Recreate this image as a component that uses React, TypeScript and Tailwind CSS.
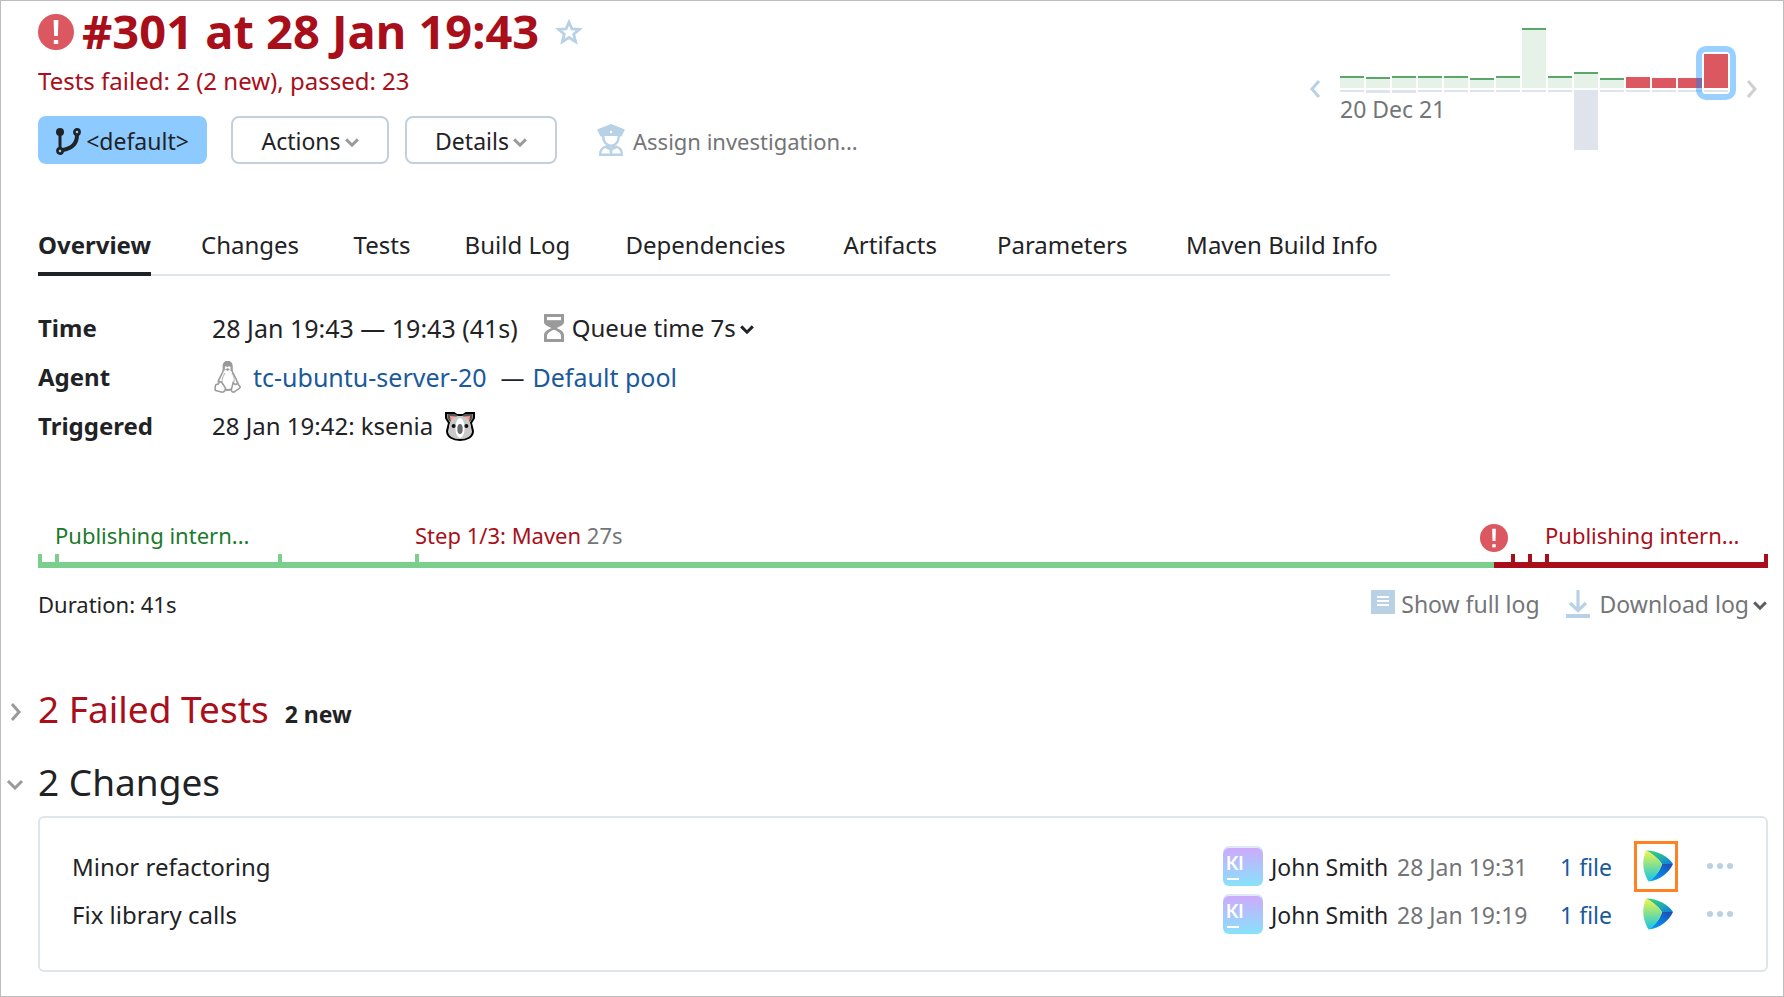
import React from 'react';

type Bar = { top: number; bottom: number; failed?: boolean; selected?: boolean };

const history: Bar[] = [
  { top: 12, bottom: 2 },
  { top: 11, bottom: 3 },
  { top: 12, bottom: 3 },
  { top: 12, bottom: 2 },
  { top: 12, bottom: 2 },
  { top: 10, bottom: 2 },
  { top: 12, bottom: 2 },
  { top: 60, bottom: 2 },
  { top: 12, bottom: 2 },
  { top: 16, bottom: 60 },
  { top: 10, bottom: 2 },
  { top: 11, bottom: 2, failed: true },
  { top: 10, bottom: 2, failed: true },
  { top: 10, bottom: 2, failed: true },
  { top: 34, bottom: 2, failed: true, selected: true },
];

const tabs = ['Overview', 'Changes', 'Tests', 'Build Log', 'Dependencies', 'Artifacts', 'Parameters', 'Maven Build Info'];

type Segment = { size: number; failed?: boolean; tick?: boolean; label?: React.ReactNode; alert?: boolean; last?: boolean };

const segments: Segment[] = [
  { size: 17, tick: true },
  { size: 223, tick: true, label: <span className="text-[#1b7a2b]">Publishing intern...</span> },
  { size: 137, tick: true },
  {
    size: 1079,
    tick: true,
    label: (
      <span className="text-[#a90f1a]">
        Step 1/3: Maven <span className="text-[#737577]">27s</span>
      </span>
    ),
  },
  { size: 17, failed: true, alert: true },
  { size: 17, failed: true, tick: true },
  { size: 17, failed: true, tick: true },
  { size: 223, failed: true, tick: true, last: true, label: <span className="text-[#a90f1a]">Publishing intern...</span> },
];

const changes = [
  { message: 'Minor refactoring', author: 'John Smith', date: '28 Jan 19:31', marked: true },
  { message: 'Fix library calls', author: 'John Smith', date: '28 Jan 19:19', marked: false },
];

function Chevron({ dir, className }: { dir: 'down' | 'left' | 'right'; className: string }) {
  const points = { down: '2,2 9,9 16,2', left: '9,1 2,9 9,17', right: '2,1 9,9 2,17' }[dir];
  return (
    <svg
      className={className}
      viewBox={dir === 'down' ? '0 0 18 11' : '0 0 11 18'}
      fill="none"
      stroke="currentColor"
      strokeWidth="3"
      aria-hidden="true"
    >
      <polyline points={points} />
    </svg>
  );
}

function SmallChevron({ className }: { className: string }) {
  return (
    <svg className={className} width="14" height="14" viewBox="0 0 14 14" fill="none" stroke="currentColor" strokeWidth="3" aria-hidden="true">
      <path d="M1.2 5.4 L7 11.2 L12.8 5.4" />
    </svg>
  );
}

function ErrorIcon({ size }: { size: number }) {
  return (
    <svg className="shrink-0" width={size} height={size} viewBox="0 0 36 36" aria-hidden="true">
      <circle cx="18" cy="18" r="18" fill="#db5860" />
      <path d="M15.6 6h4.8l-.5 16h-3.8z" fill="#fff" />
      <rect x="15.8" y="26" width="4.4" height="4" fill="#fff" />
    </svg>
  );
}

function StarIcon() {
  return (
    <svg width="28" height="26" viewBox="0 0 28 26" fill="none" stroke="#b8d1e5" strokeWidth="2.8" aria-hidden="true">
      <path d="M14 3.2 L16.9 9.8 L24.4 10.4 L18.7 15.200 L20.600 22.600 L14 18.500 L7.400 22.600 L9.300 15.200 L3.600 10.400 L11.100 9.800 Z" />
    </svg>
  );
}

function BranchIcon() {
  return (
    <svg width="26" height="28" viewBox="0 0 26 28" fill="none" stroke="#1f2326" aria-hidden="true">
      <circle cx="4" cy="5" r="4" fill="#1f2326" stroke="none" />
      <path d="M4 5v17" strokeWidth="3" />
      <circle cx="4" cy="24" r="2.6" strokeWidth="2.6" />
      <circle cx="21" cy="5" r="2.6" strokeWidth="2.6" />
      <path d="M21 8c0 7-3 13-14 15" strokeWidth="4" />
    </svg>
  );
}

function OfficerIcon() {
  return (
    <svg width="28" height="32" viewBox="0 0 28 32" aria-hidden="true">
      <path d="M14 0 L28 5.5 L24.5 12.5 H3.5 L0 5.5 Z" fill="#b8d1e5" />
      <circle cx="14" cy="8" r="1.2" fill="#fff" />
      <path d="M6.2 12 C6.2 25 21.8 25 21.8 12" fill="#fff" stroke="#b8d1e5" strokeWidth="2.4" />
      <path d="M3.2 30.8 C3 25.5 6 22.6 10 22.6 H18 C22 22.6 25 25.5 24.8 30.8 Z" fill="#fff" stroke="#b8d1e5" strokeWidth="2.4" />
      <path d="M8 22.5 L14 25.5 L20 22.5 M14 24v7" fill="none" stroke="#b8d1e5" strokeWidth="2.6" />
    </svg>
  );
}

function HourglassIcon() {
  return (
    <svg width="20" height="28" viewBox="0 0 20 28" aria-hidden="true">
      <path d="M0 0H20V8C20 10.500 17 12 12.500 14C17 16 20 18 20 21V28H0V21C0 18 3 16 7.500 14C3 12 0 10.500 0 8Z" fill="#9a9a9a" />
      <path d="M3 3h14v3.200H3z" fill="#fff" />
      <path d="M10 15.800c4 1.600 7 3.600 7 6.200v3H3v-3c0-2.600 3-4.600 7-6.200z" fill="#fff" />
    </svg>
  );
}

function PenguinIcon() {
  return (
    <svg width="27" height="32" viewBox="0 0 27 32" fill="none" stroke="#9c9c9c" strokeWidth="1.6" aria-hidden="true">
      <path d="M9.400 8.500V5.500C9.400 2.500 11 .7 13.600 .7s4.300 1.800 4.300 4.800v3.500c0 3.500 4.600 6.500 5.300 12.500M9.400 8.500C9.400 12.500 5 16 4 21.500" />
      <path d="M9.200 5.500C9.200 2 11 .4 13.600 .4S18 2 18 5.500l-.8.500-2-.8-1.600.8-1.700-.8-1.800.8z" fill="#999" stroke="none" />
      <path d="M10 4.500v5M17.400 4.500v5.500" strokeWidth="1.800" />
      <path d="M11 8.500l2.600 1.600 2.500-1.600-2.500-1.400z" fill="#a3a3a3" stroke="none" />
      <path d="M2 23.600l2.300-.6 1.400-2.300 2 .5 3.600 5.600c.5 2-.8 4.300-3 4.400L1.600 29.600c-1.200-.8 0-2.600-.4-4.200z" />
      <path d="M19.200 21.500l1.600 1.700c1.500.4 2.500-.4 3-1.400l.8 2.200 1.700 1.800c-.5 2.500-4.500 3.200-5.700 5-1.800.8-3.600-.2-3.200-2.500z" />
      <path d="M10.800 28.400c2.200.7 4.400.7 6.600 0" strokeWidth="2" />
      <path d="M8 21c0-4 1.500-6.500 3-9M18 12c2 3 2.600 5.500 2 9" strokeWidth=".8" />
    </svg>
  );
}

function KoalaIcon() {
  return (
    <svg width="30" height="29" viewBox="0 0 30 29" role="img" aria-label="koala">
      <path d="M1 1h8l3 2h6l3-2h8v5l-3 5 2 8c0 6-6 9-13 9S2 25 2 19l2-8-3-5z" fill="#c9c9c9" stroke="#000" strokeWidth="2" />
      <path d="M2.500 2h7.500l3 1.500-7.500 7.500-3-5zM27.500 2H20l-3 1.500 7.500 7.500 3-5z" fill="#555" />
      <path d="M5 4l6 .5-5 6zM25 4l-6 .5 5 6z" fill="#ff9b8a" />
      <path d="M15 4c8 0 11 6 11 13s-4 10-11 10S4 24 4 17 7 4 15 4z" fill="#c9c9c9" />
      <ellipse cx="15" cy="16" rx="4.600" ry="10" fill="#fff" />
      <ellipse cx="15" cy="17" rx="2.700" ry="5" fill="#6b6b6b" />
      <circle cx="8.600" cy="14" r="2" fill="#111" />
      <circle cx="21.400" cy="14" r="2" fill="#111" />
    </svg>
  );
}

function LogIcon() {
  return (
    <svg width="24" height="24" viewBox="0 0 24 24" aria-hidden="true">
      <rect width="24" height="24" fill="#b8d1e5" />
      <path d="M6 7h12M6 11h12M6 15h12" stroke="#fff" strokeWidth="2" />
    </svg>
  );
}

function DownloadIcon() {
  return (
    <svg width="24" height="28" viewBox="0 0 24 28" fill="none" stroke="#b8d1e5" aria-hidden="true">
      <path d="M12 0v21M4 13l8 7.600L20 13" strokeWidth="3.200" />
      <path d="M0 26h24" strokeWidth="4" />
    </svg>
  );
}

function Avatar() {
  return (
    <svg width="40" height="40" viewBox="0 0 40 40" role="img" aria-label="Avatar">
      <defs>
        <linearGradient id="avatar" x1="0" y1="0" x2="0" y2="1">
          <stop offset="0" stopColor="#cdaafc" />
          <stop offset="1" stopColor="#87e2fb" />
        </linearGradient>
      </defs>
      <rect width="40" height="36" rx="6" fill="#dfe9f1" />
      <rect y="2" width="40" height="38" rx="6" fill="url(#avatar)" />
      <text x="3" y="24" fill="#fff" fontSize="18" fontWeight="700" fontFamily="Lato, sans-serif">
        KI
      </text>
      <path d="M4 33h12" stroke="#fff" strokeWidth="2" />
    </svg>
  );
}

function IdeIcon() {
  return (
    <svg width="30" height="32" viewBox="0 0 30 32" aria-hidden="true">
      <defs>
        <linearGradient id="ideLeft" x1="0" y1="0" x2="0" y2="1">
          <stop offset="0" stopColor="#f7f54a" />
          <stop offset=".5" stopColor="#7fdf92" />
          <stop offset="1" stopColor="#10c3ee" />
        </linearGradient>
        <linearGradient id="ideTop" x1="0" y1="0" x2="1" y2=".9">
          <stop offset="0" stopColor="#2fdc6e" />
          <stop offset=".5" stopColor="#25b5a0" />
          <stop offset="1" stopColor="#0b7fe0" />
        </linearGradient>
        <linearGradient id="ideBottom" x1="0" y1="1" x2="1" y2="0">
          <stop offset="0" stopColor="#06a5f2" />
          <stop offset=".55" stopColor="#0c74d8" />
          <stop offset="1" stopColor="#2547a5" />
        </linearGradient>
      </defs>
      <path d="M3 .5C14 .5 25 6 30 14L19 14C15 8 9 3.500 3 .5z" fill="url(#ideTop)" />
      <path d="M30 14C26 23 17 30 5.500 31.500 12 27 17 21 19 14z" fill="url(#ideBottom)" />
      <path d="M3 .5C-1 10-1 21 5.500 31.500 12 27 17 21 19 14 15 8 9 3.500 3 .5z" fill="url(#ideLeft)" />
    </svg>
  );
}

function BuildHistory() {
  return (
    <div className="mt-[27px] mr-[11px] flex items-start text-[23px]">
      <button aria-label="Previous builds" className="mt-[52px] mr-[19px]">
        <Chevron dir="left" className="h-[18px] w-[11px] text-[#b8d1e5]" />
      </button>
      <div className="relative flex gap-0.5">
        {history.map((bar, i) => (
          <div key={i} className="relative w-6">
            <div className="flex h-[60px] items-end">
              <div
                className={bar.failed ? 'w-full bg-[#db5860]' : 'w-full border-t-2 border-[#59a869] bg-[#e6f1e8]'}
                style={{ height: bar.top }}
              />
            </div>
            <div className="mt-0.5 bg-[#dfe4ec]" style={{ height: bar.bottom }} />
            {bar.selected && (
              <div className="absolute -inset-x-2 top-[18px] h-[54px] rounded-[10px] border-6 border-[#008aff]/40" />
            )}
          </div>
        ))}
        <span className="absolute top-[65px] left-0 leading-8 text-[#737577]">20 Dec 21</span>
      </div>
      <button aria-label="Next builds" className="mt-[52px] ml-[18px]">
        <Chevron dir="right" className="h-[18px] w-[11px] text-[#cfcfcf]" />
      </button>
    </div>
  );
}

function Timeline() {
  return (
    <div className="mt-[76px] flex text-[22px]">
      {segments.map((s, i) => (
        <div key={i} className="relative min-w-0 basis-0" style={{ flexGrow: s.size }}>
          <div className="h-[35px] whitespace-nowrap">{s.label}</div>
          {s.alert && (
            <div className="absolute top-[5px] -left-3.5">
              <ErrorIcon size={28} />
            </div>
          )}
          <div
            className={`h-2 ${s.failed ? 'border-[#a90f1a]' : 'border-[#7bcf8c]'} ${s.tick ? 'border-l-4' : ''} ${s.last ? 'border-r-4' : ''}`}
          />
          <div className={`h-1.5 ${s.failed ? 'bg-[#a90f1a]' : 'bg-[#7bcf8c]'}`} />
        </div>
      ))}
    </div>
  );
}

export default function App() {
  return (
    <main className="min-h-screen border border-[#bdbdbd] bg-white pr-[15px] pb-6 pl-[37px] font-['Noto_Sans','Open_Sans',sans-serif] text-[24px] leading-8 text-[#1f2326]">
      <header className="flex items-start justify-between">
        <div>
          <div className="flex h-[62px] items-center">
            <ErrorIcon size={36} />
            <h1 className="ml-2 pb-0.5 text-[47px] leading-[56px] font-bold whitespace-nowrap text-[#a90f1a]">#301 at 28 Jan 19:43</h1>
            <button aria-label="Add to favorites" className="ml-4">
              <StarIcon />
            </button>
          </div>
          <p className="mt-0.5 text-[#a90f1a]">Tests failed: 2 (2 new), passed: 23</p>
          <div className="mt-[19px] flex items-center text-[23px] whitespace-nowrap">
            <button className="flex h-12 w-[169px] items-center justify-center gap-1 rounded-lg bg-[#8ccaff] pt-0.5">
              <BranchIcon />
              &lt;default&gt;
            </button>
            <button className="ml-6 flex h-12 w-[158px] items-center justify-center gap-1 rounded-lg border-2 border-[#c3d0dc] pt-0.5">
              Actions
              <SmallChevron className="text-[#9a9a9a]" />
            </button>
            <button className="ml-4 flex h-12 w-[152px] items-center justify-center gap-1 rounded-lg border-2 border-[#c3d0dc] pt-0.5">
              Details
              <SmallChevron className="text-[#9a9a9a]" />
            </button>
            <button className="ml-10 flex h-12 items-center gap-2 text-[22px] text-[#737577]">
              <OfficerIcon />
              <span className="pt-0.5">Assign investigation...</span>
            </button>
          </div>
        </div>
        <BuildHistory />
      </header>

      <nav className="mt-[65px] flex">
        <div className="flex gap-[50px] border-b-2 border-[#dfe5eb]">
          {tabs.map((tab, i) => (
            <a
              key={tab}
              href="#"
              data-label={tab}
              className={`-mb-0.5 pb-[11px] whitespace-nowrap after:invisible after:block after:h-0 after:overflow-hidden after:font-bold after:content-[attr(data-label)] border-b-4 ${i === 0 ? 'border-[#1f2326] font-bold' : 'border-transparent'}`}
            >
              {tab}
            </a>
          ))}
        </div>
      </nav>

      <dl className="mt-9 flex flex-col gap-[17px] whitespace-nowrap">
        <div className="flex">
          <dt className="w-[174px] font-bold">Time</dt>
          <dd className="flex items-center text-[25px]">
            28 Jan 19:43 — 19:43 (41s)
            <button className="ml-[26px] flex items-center">
              <HourglassIcon />
              <span className="mr-1 ml-2 text-[24px]">Queue time 7s</span>
              <SmallChevron className="text-[#1f2326]" />
            </button>
          </dd>
        </div>
        <div className="flex">
          <dt className="w-[174px] font-bold">Agent</dt>
          <dd className="flex items-center">
            <span className="mr-3 ml-0.5">
              <PenguinIcon />
            </span>
            <a href="#" className="mr-3.5 text-[25px] text-[#1a5a9c]">
              tc-ubuntu-server-20
            </a>
            —
            <a href="#" className="ml-2 text-[25px] text-[#1a5a9c]">
              Default pool
            </a>
          </dd>
        </div>
        <div className="flex">
          <dt className="w-[174px] font-bold">Triggered</dt>
          <dd className="flex items-center gap-3">
            28 Jan 19:42: ksenia
            <KoalaIcon />
          </dd>
        </div>
      </dl>

      <div className="h-px" />
      <Timeline />

      <div className="mt-5 flex items-center justify-between whitespace-nowrap">
        <span className="text-[22px]">Duration: 41s</span>
        <div className="flex text-[23px] text-[#737577]">
          <button className="flex items-center gap-1.5">
            <span className="pb-1">
              <LogIcon />
            </span>
            Show full log
          </button>
          <button className="ml-[26px] flex items-center">
            <DownloadIcon />
            <span className="mr-1 ml-2.5">Download log</span>
            <SmallChevron className="mr-px text-[#5c5e60]" />
          </button>
        </div>
      </div>

      <section className="mt-[67px] -ml-8 flex h-12 items-center">
        <button aria-label="Expand failed tests" className="flex w-8 pt-0.5 pl-1">
          <Chevron dir="right" className="h-[18px] w-[11px] text-[#9a9a9a]" />
        </button>
        <h2 className="flex items-baseline gap-4 text-[37px] leading-[48px] text-[#a90f1a]">
          2 Failed Tests
          <span className="text-[23px] font-bold text-[#1f2326]">2 new</span>
        </h2>
      </section>

      <section className="mt-[23px]">
        <div className="-ml-8 flex h-12 items-center">
          <button aria-label="Collapse changes" className="flex w-8 pt-1">
            <Chevron dir="down" className="h-[11px] w-[18px] text-[#9a9a9a]" />
          </button>
          <h2 className="text-[37px] leading-[48px]">2 Changes</h2>
        </div>
        <ul className="mt-2.5 rounded-md border-2 border-[#dfe5eb] pt-6 pr-[33px] pb-8 pl-8 whitespace-nowrap">
          {changes.map((c) => (
            <li key={c.date} className="flex h-12 items-center">
              <span className="grow pt-0.5">{c.message}</span>
              <Avatar />
              <div className="ml-2 flex pt-0.5 text-[23px]">
                <span className="w-[126px]">{c.author}</span>
                <span className="w-[163px] text-[#737577]">{c.date}</span>
                <a href="#" className="w-[74px] text-[#1a5a9c]">
                  1 file
                </a>
              </div>
              <button
                aria-label="Open in IDE"
                className={`-my-1 flex h-[51px] w-11 items-center justify-center border-3 pl-1 ${c.marked ? 'border-[#ff8126]' : 'border-transparent'}`}
              >
                <IdeIcon />
              </button>
              <button aria-label="More actions" className="ml-[29px]">
                <svg width="26" height="6" viewBox="0 0 26 6" fill="#b8d1e5">
                  <circle cx="3" cy="3" r="3" />
                  <circle cx="13" cy="3" r="3" />
                  <circle cx="23" cy="3" r="3" />
                </svg>
              </button>
            </li>
          ))}
        </ul>
      </section>
    </main>
  );
}
